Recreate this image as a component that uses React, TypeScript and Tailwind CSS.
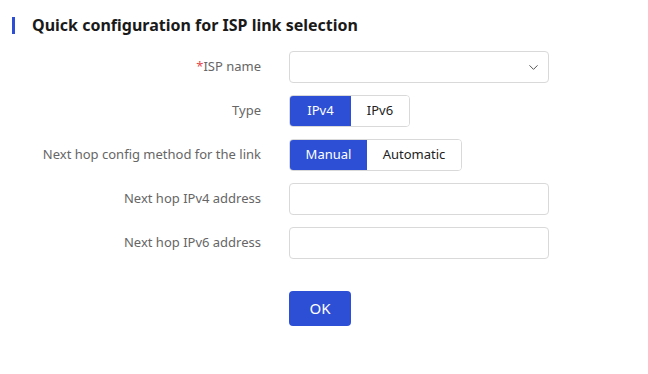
import { ChevronDown } from "lucide-react";

const LABEL_W = "w-[261px]";

function Row({ label, required, children }: { label: string; required?: boolean; children: React.ReactNode }) {
  return (
    <div className="flex items-center h-[32px]">
      <div className={`${LABEL_W} shrink-0 text-right text-[13px] text-[#666]`}>
        {required && <span className="text-[#e5484d]">*</span>}
        {label}
      </div>
      <div className="ml-[28px]">{children}</div>
    </div>
  );
}

function Segmented({ options, active, widths }: { options: string[]; active: number; widths: string[] }) {
  return (
    <div className="flex h-[32px] rounded-[4px] border border-[#d9d9d9] overflow-hidden">
      {options.map((o, i) => (
        <button
          key={o}
          className={`${widths[i]} h-full text-[13px] ${
            i === active ? "bg-[#2c4fd6] text-white" : "bg-white text-[#222]"
          }`}
        >
          {o}
        </button>
      ))}
    </div>
  );
}

export default function App() {
  return (
    <div className="w-[648px] h-[374px] bg-white" style={{ fontFamily: '"Noto Sans", Tahoma, sans-serif' }}>
      <div className="flex items-center pt-[15px] pl-[12px]">
        <span className="w-[3px] h-[17px] bg-[#2c4fd6]" />
        <h1 className="ml-[17px] text-[16px] font-bold text-[#1a1a1a] leading-[20px]">
          Quick configuration for ISP link selection
        </h1>
      </div>

      <div className="mt-[16px] flex flex-col gap-[12px]">
        <Row label="ISP name" required>
          <div className="w-[260px] h-[32px] rounded-[4px] border border-[#d9d9d9] flex items-center justify-end pr-[7px]">
            <ChevronDown size={15} strokeWidth={1.6} className="text-[#555]" />
          </div>
        </Row>
        <Row label="Type">
          <Segmented options={["IPv4", "IPv6"]} active={0} widths={["w-[61px]", "w-[58px]"]} />
        </Row>
        <Row label="Next hop config method for the link">
          <Segmented options={["Manual", "Automatic"]} active={0} widths={["w-[77px]", "w-[94px]"]} />
        </Row>
        <Row label="Next hop IPv4 address">
          <input className="w-[260px] h-[32px] rounded-[4px] border border-[#d9d9d9] outline-none" />
        </Row>
        <Row label="Next hop IPv6 address">
          <input className="w-[260px] h-[32px] rounded-[4px] border border-[#d9d9d9] outline-none" />
        </Row>
      </div>

      <div className="mt-[32px] ml-[289px]">
        <button className="w-[62px] h-[35px] rounded-[4px] bg-[#2c4fd6] text-white text-[15px]">OK</button>
      </div>
    </div>
  );
}
